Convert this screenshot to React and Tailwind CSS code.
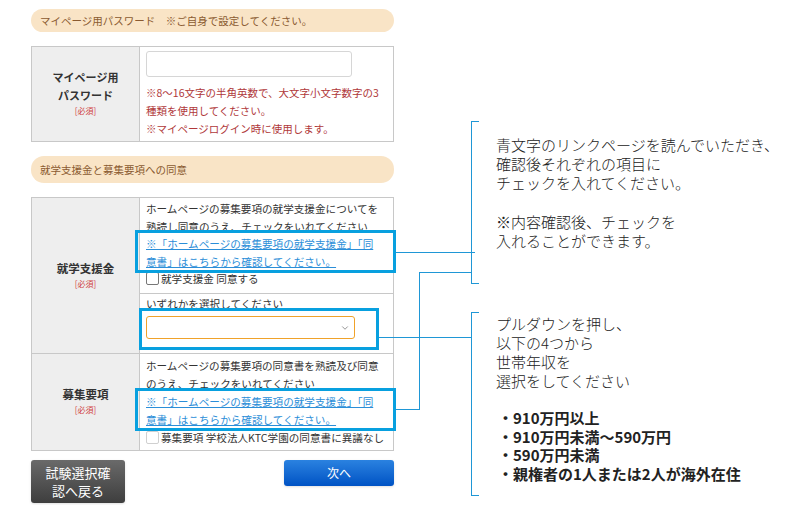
import { ChevronDown } from 'lucide-react';

const JP = { fontFamily: '"Noto Sans CJK JP", "Noto Sans", sans-serif' };

function Required() {
  return <div className="text-[8px] leading-[14px] text-[#d04040]">[必須]</div>;
}

function LinkText() {
  return (
    <div className="text-[#2b8ed8] underline decoration-[#2b8ed8]">
      ※「ホームページの募集要項の就学支援金」「同
      <br />
      意書」はこちらから確認してください。
    </div>
  );
}

function Checkbox({ faded }) {
  return (
    <span
      className={`inline-block w-[13px] h-[13px] rounded-[2px] bg-white border align-[-2px] mr-[2px] ${
        faded ? 'border-[#d0d0d0]' : 'border-[#777]'
      }`}
    />
  );
}

export default function App() {
  return (
    <div className="relative w-[793px] h-[505px] bg-white overflow-hidden flex text-[#333]" style={JP}>
      {/* form */}
      <div className="ml-[31px] w-[363px] pt-[9px] flex flex-col">
        <div className="h-[23px] rounded-[12px] bg-[#f9e4c6] pl-[9px] flex items-center text-[10.5px] text-[#8a5a30]">
          マイページ用パスワード　※ご自身で設定してください。
        </div>

        <div className="mt-[14px] h-[96px] flex border border-[#c8c8c8]">
          <div className="w-[108px] shrink-0 bg-[#eeeeee] border-r border-[#c8c8c8] flex flex-col items-center justify-center text-center pb-[3px]">
            <div className="text-[11px] leading-[18px] font-bold text-[#333]">マイページ用</div>
            <div className="text-[11px] leading-[18px] font-bold text-[#333]">パスワード</div>
            <Required />
          </div>
          <div className="flex-1 px-[6px] pt-[4px]">
            <div className="w-[206px] h-[26px] rounded-[3px] border border-[#d6d6d6] bg-white" />
            <div className="mt-[7px] text-[10.5px] leading-[18px] text-[#b0383a]">
              ※8〜16文字の半角英数で、大文字小文字数字の3
              <br />
              種類を使用してください。
              <br />
              ※マイページログイン時に使用します。
            </div>
          </div>
        </div>

        <div className="mt-[14px] h-[27px] rounded-[13px] bg-[#f9e4c6] pl-[9px] flex items-center text-[10.5px] text-[#8a5a30]">
          就学支援金と募集要項への同意
        </div>

        <div className="mt-[14px] border border-[#c8c8c8] flex flex-col text-[10.6px]">
          <div className="flex border-b border-[#c8c8c8]">
            <div className="w-[108px] shrink-0 bg-[#eeeeee] border-r border-[#c8c8c8] flex flex-col items-center justify-center text-center pb-[2px]">
              <div className="text-[11.5px] leading-[18px] font-bold">就学支援金</div>
              <Required />
            </div>
            <div className="flex-1 flex flex-col">
              <div className="h-[96px] border-b border-[#c8c8c8] px-[6px] pt-[2px] leading-[17.5px]">
                <div>
                  ホームページの募集要項の就学支援金についてを
                  <br />
                  熟読し同意のうえ、チェックをいれてください
                </div>
                <LinkText />
                <div>
                  <Checkbox />
                  就学支援金 同意する
                </div>
              </div>
              <div className="h-[59px] px-[6px] pt-[1px] leading-[18px]">
                <div>いずれかを選択してください</div>
                <div className="mt-[3px] w-[209px] h-[23px] rounded-[3px] border border-[#f0a22a] bg-white flex items-center justify-end pr-[4px]">
                  <ChevronDown size={10} strokeWidth={1.5} className="text-[#555]" />
                </div>
              </div>
            </div>
          </div>
          <div className="flex h-[96px]">
            <div className="w-[108px] shrink-0 bg-[#eeeeee] border-r border-[#c8c8c8] flex flex-col items-center justify-center text-center pb-[2px]">
              <div className="text-[11.5px] leading-[18px] font-bold">募集要項</div>
              <Required />
            </div>
            <div className="flex-1 px-[6px] pt-[3px] leading-[18px]">
              <div>
                ホームページの募集要項の同意書を熟読及び同意
                <br />
                のうえ、チェックをいれてください
              </div>
              <LinkText />
              <div className="whitespace-nowrap">
                <Checkbox faded />
                募集要項 学校法人KTC学園の同意書に異議なし
              </div>
            </div>
          </div>
        </div>

        <div className="mt-[9px] flex justify-between items-start">
          <button className="w-[94px] h-[43px] rounded-[3px] bg-gradient-to-b from-[#6a6a6a] to-[#3e3e3e] text-white text-[13px] leading-[18px] flex flex-col items-center justify-center shadow-sm">
            <span>試験選択確</span>
            <span>認へ戻る</span>
          </button>
          <button className="w-[110px] h-[26px] rounded-[3px] bg-gradient-to-b from-[#2a82e0] to-[#0052c4] text-white text-[12px] flex items-center justify-center shadow-sm">
            次へ
          </button>
        </div>
      </div>

      {/* annotations */}
      <div className="ml-[77px] pt-[121px] flex flex-col text-[15px] text-[#222]">
        <div className="relative h-[163px] border-l border-[#1f97d6] pl-[24px] pt-[14px] leading-[19.2px] font-light">
          <span className="absolute left-0 top-0 w-[7px] h-px bg-[#1f97d6]" />
          <span className="absolute left-0 bottom-0 w-[7px] h-px bg-[#1f97d6]" />
          <div className="whitespace-nowrap">
            青文字のリンクページを読んでいただき、
            <br />
            確認後それぞれの項目に
            <br />
            チェックを入れてください。
            <br />
            <br />
            ※内容確認後、チェックを
            <br />
            入れることができます。
          </div>
        </div>
        <div className="relative mt-[28px] h-[184px] border-l border-[#1f97d6] pl-[24px] pt-[2px] leading-[19px]">
          <span className="absolute left-0 top-0 w-[7px] h-px bg-[#1f97d6]" />
          <span className="absolute left-0 bottom-0 w-[7px] h-px bg-[#1f97d6]" />
          <div className="whitespace-nowrap font-light">
            プルダウンを押し、
            <br />
            以下の4つから
            <br />
            世帯年収を
            <br />
            選択をしてください
          </div>
          <div className="mt-[19px] whitespace-nowrap font-bold leading-[18.7px] pl-[2px]">
            <div>・910万円以上</div>
            <div>・910万円未満〜590万円</div>
            <div>・590万円未満</div>
            <div>・親権者の1人または2人が海外在住</div>
          </div>
        </div>
      </div>

      {/* highlight boxes */}
      <div className="absolute left-[135px] top-[230px] w-[261px] h-[43px] border-[3px] border-[#08a0df]" />
      <div className="absolute left-[139px] top-[308px] w-[240px] h-[42px] border-[3px] border-[#08a0df]" />
      <div className="absolute left-[135px] top-[388px] w-[261px] h-[43px] border-[3px] border-[#08a0df]" />

      {/* connector lines */}
      <div className="absolute left-[396px] top-[252px] w-[79px] h-px bg-[#1f97d6]" />
      <div className="absolute left-[419px] top-[272px] w-[52px] h-px bg-[#1f97d6]" />
      <div className="absolute left-[419px] top-[272px] w-px h-[138px] bg-[#1f97d6]" />
      <div className="absolute left-[396px] top-[409px] w-[24px] h-px bg-[#1f97d6]" />
      <div className="absolute left-[379px] top-[337px] w-[92px] h-px bg-[#1f97d6]" />
    </div>
  );
}
